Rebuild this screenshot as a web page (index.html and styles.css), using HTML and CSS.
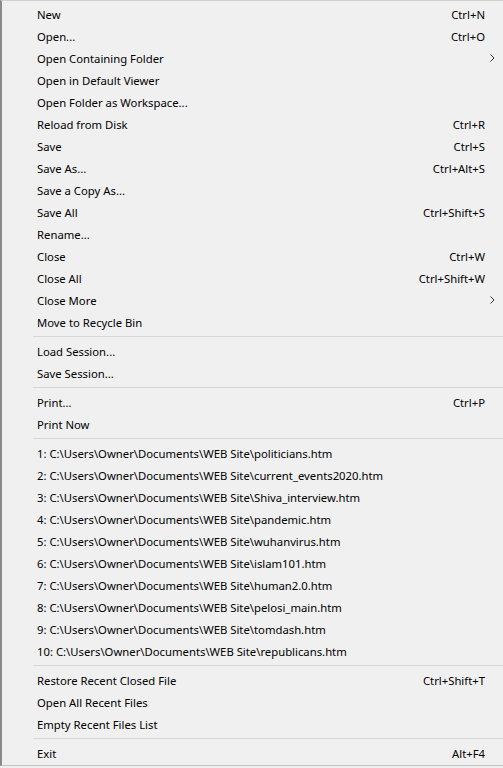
FILE: index.html
```html
<!DOCTYPE html>
<html lang="en">
<head>
    <meta charset="UTF-8">
    <meta name="viewport" content="width=device-width, initial-scale=1.0">
    <title>File Menu</title>
    <link rel="stylesheet" href="styles.css">
</head>
<body>

<div class="menu">
    <div class="item"><span class="label">New</span><span class="key">Ctrl+N</span><span class="sub"></span></div>
    <div class="item"><span class="label">Open...</span><span class="key">Ctrl+O</span><span class="sub"></span></div>
    <div class="item"><span class="label">Open Containing Folder</span><span class="key"></span><span class="sub"><svg width="5" height="8" viewBox="0 0 5 8"><path d="M0.5 0.5 L4 4 L0.5 7.5" fill="none" stroke="#333" stroke-width="1"/></svg></span></div>
    <div class="item"><span class="label">Open in Default Viewer</span><span class="key"></span><span class="sub"></span></div>
    <div class="item"><span class="label">Open Folder as Workspace...</span><span class="key"></span><span class="sub"></span></div>
    <div class="item"><span class="label">Reload from Disk</span><span class="key">Ctrl+R</span><span class="sub"></span></div>
    <div class="item"><span class="label">Save</span><span class="key">Ctrl+S</span><span class="sub"></span></div>
    <div class="item"><span class="label">Save As...</span><span class="key">Ctrl+Alt+S</span><span class="sub"></span></div>
    <div class="item"><span class="label">Save a Copy As...</span><span class="key"></span><span class="sub"></span></div>
    <div class="item"><span class="label">Save All</span><span class="key">Ctrl+Shift+S</span><span class="sub"></span></div>
    <div class="item"><span class="label">Rename...</span><span class="key"></span><span class="sub"></span></div>
    <div class="item"><span class="label">Close</span><span class="key">Ctrl+W</span><span class="sub"></span></div>
    <div class="item"><span class="label">Close All</span><span class="key">Ctrl+Shift+W</span><span class="sub"></span></div>
    <div class="item"><span class="label">Close More</span><span class="key"></span><span class="sub"><svg width="5" height="8" viewBox="0 0 5 8"><path d="M0.5 0.5 L4 4 L0.5 7.5" fill="none" stroke="#333" stroke-width="1"/></svg></span></div>
    <div class="item"><span class="label">Move to Recycle Bin</span><span class="key"></span><span class="sub"></span></div>

    <div class="sep"></div>

    <div class="item"><span class="label">Load Session...</span><span class="key"></span><span class="sub"></span></div>
    <div class="item"><span class="label">Save Session...</span><span class="key"></span><span class="sub"></span></div>

    <div class="sep"></div>

    <div class="item"><span class="label">Print...</span><span class="key">Ctrl+P</span><span class="sub"></span></div>
    <div class="item"><span class="label">Print Now</span><span class="key"></span><span class="sub"></span></div>

    <div class="sep"></div>

    <div class="item"><span class="label">1: C:\Users\Owner\Documents\WEB Site\politicians.htm</span><span class="key"></span><span class="sub"></span></div>
    <div class="item"><span class="label">2: C:\Users\Owner\Documents\WEB Site\current_events2020.htm</span><span class="key"></span><span class="sub"></span></div>
    <div class="item"><span class="label">3: C:\Users\Owner\Documents\WEB Site\Shiva_interview.htm</span><span class="key"></span><span class="sub"></span></div>
    <div class="item"><span class="label">4: C:\Users\Owner\Documents\WEB Site\pandemic.htm</span><span class="key"></span><span class="sub"></span></div>
    <div class="item"><span class="label">5: C:\Users\Owner\Documents\WEB Site\wuhanvirus.htm</span><span class="key"></span><span class="sub"></span></div>
    <div class="item"><span class="label">6: C:\Users\Owner\Documents\WEB Site\islam101.htm</span><span class="key"></span><span class="sub"></span></div>
    <div class="item"><span class="label">7: C:\Users\Owner\Documents\WEB Site\human2.0.htm</span><span class="key"></span><span class="sub"></span></div>
    <div class="item"><span class="label">8: C:\Users\Owner\Documents\WEB Site\pelosi_main.htm</span><span class="key"></span><span class="sub"></span></div>
    <div class="item"><span class="label">9: C:\Users\Owner\Documents\WEB Site\tomdash.htm</span><span class="key"></span><span class="sub"></span></div>
    <div class="item"><span class="label">10: C:\Users\Owner\Documents\WEB Site\republicans.htm</span><span class="key"></span><span class="sub"></span></div>

    <div class="sep"></div>

    <div class="item"><span class="label">Restore Recent Closed File</span><span class="key">Ctrl+Shift+T</span><span class="sub"></span></div>
    <div class="item"><span class="label">Open All Recent Files</span><span class="key"></span><span class="sub"></span></div>
    <div class="item"><span class="label">Empty Recent Files List</span><span class="key"></span><span class="sub"></span></div>

    <div class="sep"></div>

    <div class="item"><span class="label">Exit</span><span class="key">Alt+F4</span><span class="sub"></span></div>
</div>

</body>
</html>
```

FILE: styles.css
```css
body {
    margin: 0;
    background-color: #f0f0f0;
    font-family: "Noto Sans", "Open Sans", sans-serif;
    font-size: 11.3px;
    color: #000;
}
.menu {
    height: 766px;
    border-left: 2px solid #8a8a8a;
    border-top: 1px solid #d0d0d0;
    border-bottom: 1px solid #c4c4c4;
    padding-top: 2px;
    box-sizing: border-box;
    background-color: #f0f0f0;
}
.item {
    display: grid;
    grid-template-columns: 1fr auto 18px;
    align-items: center;
    height: 22px;
    padding-left: 35px;
    white-space: nowrap;
}
.key {
    text-align: right;
}
.sub {
    display: flex;
    align-items: center;
    padding-left: 5px;
}
.sub svg {
    display: block;
}
.sep {
    height: 7px;
    margin-left: 31px;
    display: flex;
    align-items: center;
}
.sep::before {
    content: "";
    flex: 1;
    height: 1px;
    background-color: #d7d7d7;
}
```
